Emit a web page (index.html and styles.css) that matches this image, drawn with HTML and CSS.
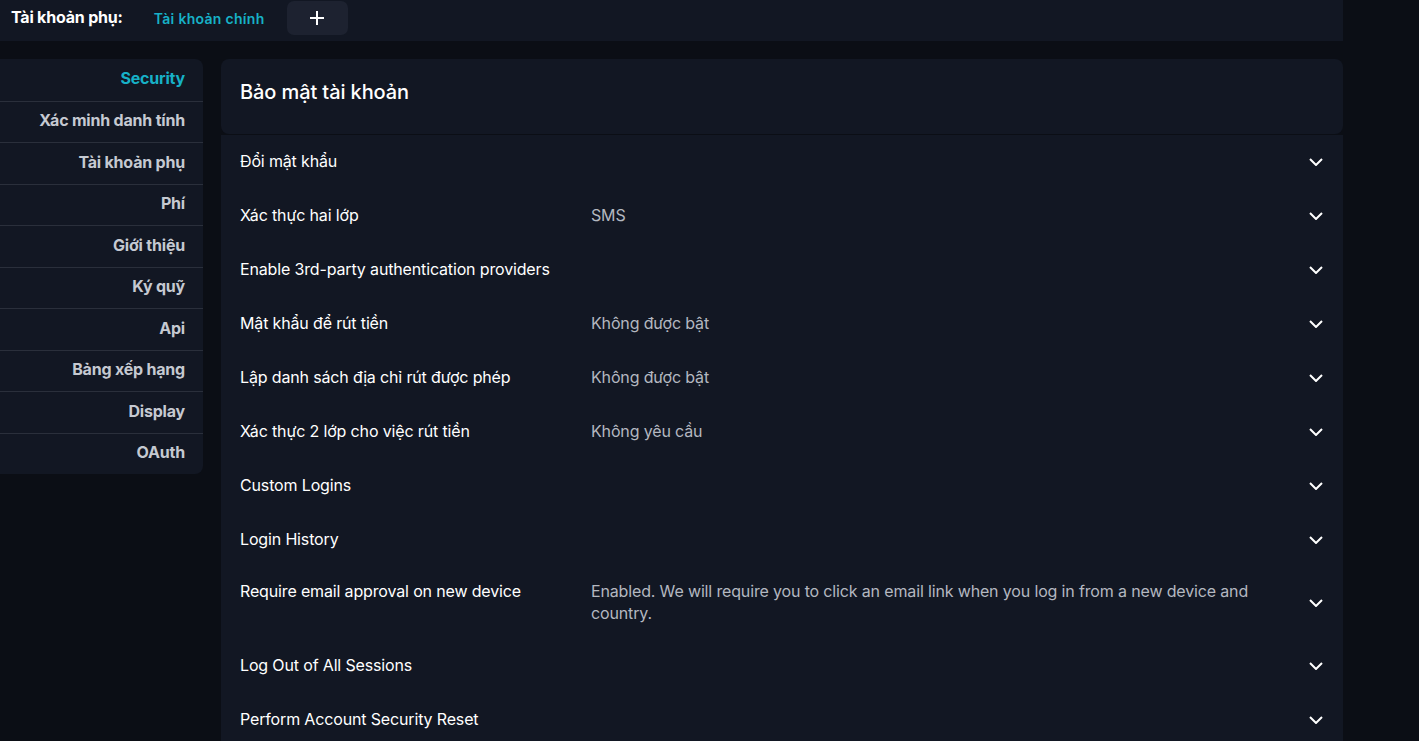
FILE: index.html
```html
<!DOCTYPE html>
<html lang="vi">

<head>
    <meta charset="UTF-8">
    <meta name="viewport" content="width=device-width, initial-scale=1.0">
    <title>Bảo mật tài khoản</title>
    <link rel="stylesheet" href="styles.css">
</head>

<body>
    <div class="page">
        <div class="subaccount-bar">
            <span class="subaccount-label">Tài khoản phụ:</span>
            <span class="subaccount-active">Tài khoản chính</span>
            <button class="add-btn">
                <svg width="16" height="16" viewBox="0 0 16 16"><path d="M8 1v14M1 8h14" stroke="#fff" stroke-width="2" fill="none"/></svg>
            </button>
        </div>

        <div class="content">
            <nav class="side-menu">
                <a class="active">Security</a>
                <a>Xác minh danh tính</a>
                <a>Tài khoản phụ</a>
                <a>Phí</a>
                <a>Giới thiệu</a>
                <a>Ký quỹ</a>
                <a>Api</a>
                <a>Bảng xếp hạng</a>
                <a>Display</a>
                <a>OAuth</a>
            </nav>

            <main class="main">
                <div class="card-header">
                    <h1>Bảo mật tài khoản</h1>
                </div>
                <div class="settings">
                    <div class="row"><span class="label">Đổi mật khẩu</span><span class="value"></span><svg class="chev" viewBox="0 0 14 8"><path d="M1 1l6 6 6-6"/></svg></div>
                    <div class="row"><span class="label">Xác thực hai lớp</span><span class="value">SMS</span><svg class="chev" viewBox="0 0 14 8"><path d="M1 1l6 6 6-6"/></svg></div>
                    <div class="row"><span class="label">Enable 3rd-party authentication providers</span><span class="value"></span><svg class="chev" viewBox="0 0 14 8"><path d="M1 1l6 6 6-6"/></svg></div>
                    <div class="row"><span class="label">Mật khẩu để rút tiền</span><span class="value">Không được bật</span><svg class="chev" viewBox="0 0 14 8"><path d="M1 1l6 6 6-6"/></svg></div>
                    <div class="row"><span class="label">Lập danh sách địa chỉ rút được phép</span><span class="value">Không được bật</span><svg class="chev" viewBox="0 0 14 8"><path d="M1 1l6 6 6-6"/></svg></div>
                    <div class="row"><span class="label">Xác thực 2 lớp cho việc rút tiền</span><span class="value">Không yêu cầu</span><svg class="chev" viewBox="0 0 14 8"><path d="M1 1l6 6 6-6"/></svg></div>
                    <div class="row"><span class="label">Custom Logins</span><span class="value"></span><svg class="chev" viewBox="0 0 14 8"><path d="M1 1l6 6 6-6"/></svg></div>
                    <div class="row"><span class="label">Login History</span><span class="value"></span><svg class="chev" viewBox="0 0 14 8"><path d="M1 1l6 6 6-6"/></svg></div>
                    <div class="row tall"><span class="label">Require email approval on new device</span><span class="value">Enabled. We will require you to click an email link when you log in from a new device and country.</span><svg class="chev" viewBox="0 0 14 8"><path d="M1 1l6 6 6-6"/></svg></div>
                    <div class="row"><span class="label">Log Out of All Sessions</span><span class="value"></span><svg class="chev" viewBox="0 0 14 8"><path d="M1 1l6 6 6-6"/></svg></div>
                    <div class="row"><span class="label">Perform Account Security Reset</span><span class="value"></span><svg class="chev" viewBox="0 0 14 8"><path d="M1 1l6 6 6-6"/></svg></div>
                </div>
            </main>
        </div>
    </div>
</body>

</html>
```

FILE: styles.css
```css
body {
    margin: 0;
    background: #0b0e15;
    font-family: Inter, "Noto Sans", sans-serif;
    color: #fff;
}

.page {
    width: 1343px;
}

.subaccount-bar {
    height: 41px;
    background: #121723;
    display: flex;
    align-items: flex-start;
}
.subaccount-label {
    font-size: 16px;
    font-weight: 700;
    margin: 7px 0 0 11px;
    letter-spacing: -0.2px;
}
.subaccount-active {
    color: #17b1c7;
    font-size: 14px;
    font-weight: 600;
    margin: 10px 0 0 31px;
    letter-spacing: 0.3px;
}
.add-btn {
    margin: 1px 0 0 22px;
    width: 61px;
    height: 34px;
    background: #1d2230;
    border: none;
    border-radius: 7px;
    display: flex;
    align-items: center;
    justify-content: center;
    cursor: pointer;
}

.content {
    display: flex;
    gap: 18px;
    margin-top: 18px;
}

.side-menu {
    width: 203px;
    flex-shrink: 0;
    align-self: flex-start;
    background: #121723;
    border-radius: 0 8px 8px 0;
    display: flex;
    flex-direction: column;
}
.side-menu a {
    height: 41.5px;
    box-sizing: border-box;
    padding: 0 18px 3px 0;
    display: flex;
    align-items: center;
    justify-content: flex-end;
    font-size: 16px;
    font-weight: 700;
    color: #c5c9d1;
    border-top: 1px solid #2a2f3b;
    letter-spacing: -0.2px;
}
.side-menu a:first-child {
    border-top: none;
}
.side-menu a.active {
    color: #17b1c7;
}

.main {
    flex: 1;
}
.card-header {
    background: #121723;
    border-radius: 8px;
    height: 75px;
    padding: 0 19px;
    box-sizing: border-box;
    display: flex;
    align-items: center;
}
.card-header h1 {
    margin: 0 0 10px;
    font-size: 20px;
    font-weight: 500;
    letter-spacing: -0.1px;
}

.settings {
    background: #121723;
    margin-top: 1px;
    padding: 0 19px;
}
.row {
    display: flex;
    align-items: center;
    padding: 15px 0 17px;
    font-size: 16px;
    line-height: 22px;
    letter-spacing: -0.15px;
}
.row.tall {
    padding: 13px 0 15px;
}
.row .label {
    width: 351px;
    flex-shrink: 0;
    align-self: flex-start;
}
.row .value {
    flex: 1;
    color: #b4b8c0;
    padding-right: 40px;
}
.chev {
    width: 14px;
    height: 8px;
    margin: 2px 1px 0 0;
    fill: none;
    stroke: #fff;
    stroke-width: 2;
}
```
